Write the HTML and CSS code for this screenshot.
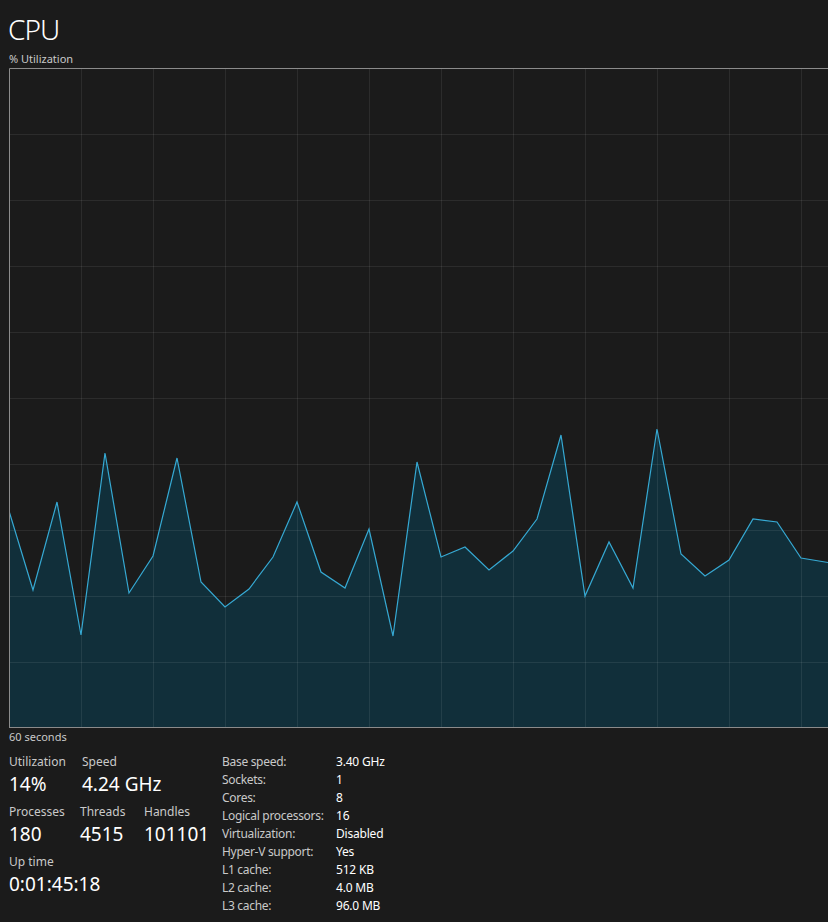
FILE: index.html
```html
<!DOCTYPE html>
<html lang="en">
<head>
    <meta charset="UTF-8">
    <title>CPU</title>
    <link rel="stylesheet" href="styles.css">
</head>
<body>
    <div id="perf-page">
        <h1 class="title">CPU</h1>
        <div class="graph-caption">% Utilization</div>

        <div class="graph">
            <svg width="819" height="660" viewBox="0 0 819 660">
                <!-- fill under the line -->
                <polygon class="area" points="0,443 24,522 48,434 72,567 96,385 120,525 144,488 168,390 192,514 216,539 240,521 264,489 288,434 312,504 336,520 360,461 384,568 408,394 432,489 456,479 480,502 504,483 528,451 552,367 576,528 600,474 624,520 648,361 672,486 696,508 720,492 744,451 768,454 792,490 816,494 840,498 840,660 0,660"/>
                <g class="grid">
                    <line x1="72.5" y1="0" x2="72.5" y2="660"/>
                    <line x1="144.5" y1="0" x2="144.5" y2="660"/>
                    <line x1="216.5" y1="0" x2="216.5" y2="660"/>
                    <line x1="288.5" y1="0" x2="288.5" y2="660"/>
                    <line x1="360.5" y1="0" x2="360.5" y2="660"/>
                    <line x1="432.5" y1="0" x2="432.5" y2="660"/>
                    <line x1="504.5" y1="0" x2="504.5" y2="660"/>
                    <line x1="576.5" y1="0" x2="576.5" y2="660"/>
                    <line x1="648.5" y1="0" x2="648.5" y2="660"/>
                    <line x1="720.5" y1="0" x2="720.5" y2="660"/>
                    <line x1="792.5" y1="0" x2="792.5" y2="660"/>
                    <line x1="0" y1="66.5" x2="819" y2="66.5"/>
                    <line x1="0" y1="132.5" x2="819" y2="132.5"/>
                    <line x1="0" y1="198.5" x2="819" y2="198.5"/>
                    <line x1="0" y1="264.5" x2="819" y2="264.5"/>
                    <line x1="0" y1="330.5" x2="819" y2="330.5"/>
                    <line x1="0" y1="396.5" x2="819" y2="396.5"/>
                    <line x1="0" y1="462.5" x2="819" y2="462.5"/>
                    <line x1="0" y1="528.5" x2="819" y2="528.5"/>
                    <line x1="0" y1="594.5" x2="819" y2="594.5"/>
                </g>
                <polyline class="line" points="0,443 24,522 48,434 72,567 96,385 120,525 144,488 168,390 192,514 216,539 240,521 264,489 288,434 312,504 336,520 360,461 384,568 408,394 432,489 456,479 480,502 504,483 528,451 552,367 576,528 600,474 624,520 648,361 672,486 696,508 720,492 744,451 768,454 792,490 816,494 840,498"/>
                <!-- frame: left, top, bottom (right side runs off the window) -->
                <path class="frame" d="M0.5 660 V0.5 H819 M0 659.5 H819"/>
            </svg>
        </div>
        <div class="graph-caption under">60 seconds</div>

        <div class="details">
            <div class="stats">
                <div class="stat-row">
                    <div class="stat w-util">
                        <div class="stat-label">Utilization</div>
                        <div class="stat-value">14%</div>
                    </div>
                    <div class="stat">
                        <div class="stat-label">Speed</div>
                        <div class="stat-value">4.24 GHz</div>
                    </div>
                </div>
                <div class="stat-row">
                    <div class="stat w-proc">
                        <div class="stat-label">Processes</div>
                        <div class="stat-value">180</div>
                    </div>
                    <div class="stat w-thread">
                        <div class="stat-label">Threads</div>
                        <div class="stat-value">4515</div>
                    </div>
                    <div class="stat">
                        <div class="stat-label">Handles</div>
                        <div class="stat-value">101101</div>
                    </div>
                </div>
                <div class="stat-row">
                    <div class="stat">
                        <div class="stat-label">Up time</div>
                        <div class="stat-value">0:01:45:18</div>
                    </div>
                </div>
            </div>

            <div class="spec-table">
                <span class="spec-label">Base speed:</span><span class="spec-value">3.40 GHz</span>
                <span class="spec-label">Sockets:</span><span class="spec-value">1</span>
                <span class="spec-label">Cores:</span><span class="spec-value">8</span>
                <span class="spec-label">Logical processors:</span><span class="spec-value">16</span>
                <span class="spec-label">Virtualization:</span><span class="spec-value">Disabled</span>
                <span class="spec-label">Hyper-V support:</span><span class="spec-value">Yes</span>
                <span class="spec-label">L1 cache:</span><span class="spec-value">512 KB</span>
                <span class="spec-label">L2 cache:</span><span class="spec-value">4.0 MB</span>
                <span class="spec-label">L3 cache:</span><span class="spec-value">96.0 MB</span>
            </div>
        </div>
    </div>
</body>
</html>
```

FILE: styles.css
```css
body {
    margin: 0;
    padding: 0;
    background-color: #1b1b1b;
    color: #ffffff;
    font-family: "Noto Sans", "Open Sans", sans-serif;
    overflow: hidden;
}

#perf-page {
    padding: 9px 0 0 8px;
}

.title {
    margin: 0;
    font-size: 28px;
    font-weight: 300;
    line-height: 40px;
    height: 40px;
    letter-spacing: -1px;
}

.graph-caption {
    font-size: 11px;
    line-height: 16px;
    color: #c9c9c9;
    margin-top: 2px;
    padding-left: 1px;
}

.graph-caption.under {
    margin-top: 1px;
}

.graph {
    height: 660px;
    overflow: hidden;
    margin-top: 1px;
    padding-left: 1px;
}

.graph svg {
    display: block;
}

.area {
    fill: #112f3a;
}

.grid line {
    stroke: rgba(255, 255, 255, 0.08);
    stroke-width: 1;
}

.line {
    fill: none;
    stroke: #36a9d3;
    stroke-width: 1.2;
}

.frame {
    fill: none;
    stroke: #8b8b8b;
    stroke-width: 1;
}

/* bottom part */
.details {
    display: flex;
    margin-top: 8px;
    padding-left: 1px;
}

.stats {
    width: 213px;
}

.stat-row {
    display: flex;
    margin-bottom: 5px;
}

.w-util {
    width: 73px;
}

.w-proc {
    width: 71px;
}

.w-thread {
    width: 64px;
}

.stat-label {
    font-size: 12px;
    line-height: 17px;
    color: #c9c9c9;
}

.stat-value {
    font-size: 19px;
    line-height: 28px;
    color: #ffffff;
}

.spec-table {
    display: grid;
    grid-template-columns: 114px auto;
    grid-auto-rows: 18px;
    font-size: 12px;
    line-height: 18px;
    margin-top: 0;
}

.spec-label {
    color: #c9c9c9;
    letter-spacing: -0.3px;
}

.spec-value {
    color: #ffffff;
    letter-spacing: -0.2px;
}
```
